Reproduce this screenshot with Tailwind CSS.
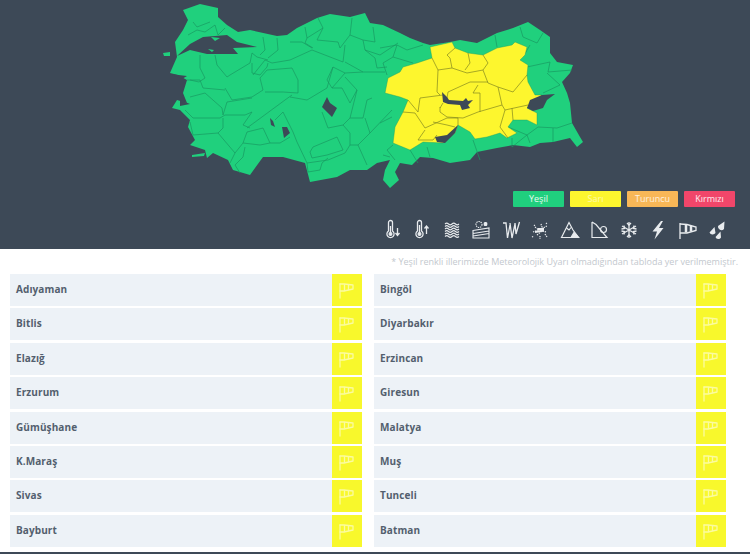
<!DOCTYPE html>
<html lang="tr">
<head>
<meta charset="utf-8">
<title>Meteoroloji Uyarı Haritası</title>
<script src="https://cdn.jsdelivr.net/npm/@tailwindcss/browser@4"></script>
</head>
<body class="bg-white">
<svg width="0" height="0" class="absolute">
  <symbol id="flag" viewBox="0 0 30 32">
    <g fill="none" stroke="#fbfba0" stroke-width="1.3" stroke-linecap="round" stroke-linejoin="round">
      <path d="M8 10V24"/><path d="M8 10H12L21 11V15L12 17H8"/><path d="M12.500 10.500V16.500M16.500 11V15.500"/>
    </g>
  </symbol>
</svg>
<div class="w-[750px] h-[554px] flex flex-col overflow-hidden font-['Open_Sans',sans-serif]">
  <header class="h-[249px] bg-[#3d4957] flex flex-col shrink-0">
    <svg class="block w-[750px] h-[191px] shrink-0 blur-[0.3px]" viewBox="0 0 750 191" stroke-linejoin="round">
      <path fill="#20d07d" d="M183,10 L200,4 L218,8 L218,17 L227,25 L238,32 L250,30 L277,36 L287,35 L297,28 L317,18 L330,14 L350,17 L365,13 L370,23 L383,25 L400,33 L410,38 L423,43 L430,45 L450,42 L460,40 L477,43 L497,33 L513,28 L528,22 L540,30 L550,37 L550,53 L557,62 L573,65 L570,73 L562,82 L567,93 L570,103 L572,123 L580,137 L583,142 L577,147 L570,138 L553,142 L540,143 L530,147 L513,145 L497,148 L477,152 L470,160 L450,163 L433,158 L420,157 L412,165 L400,163 L395,172 L399,180 L390,188 L383,180 L385,170 L390,160 L377,163 L367,170 L350,170 L337,177 L310,182 L305,163 L283,157 L263,157 L250,175 L233,170 L228,160 L213,153 L207,158 L205,150 L190,145 L195,140 L188,127 L190,120 L180,110 L172,108 L177,100 L187,103 L183,93 L187,80 L178,75 L170,73 L177,57 L175,42 L183,30 L188,20 Z"/>
      <path fill="#20d07d" d="M163,53 L170,52 L170,56 L164,56 Z M192,155 L205,153 L204,156 L192,157 Z"/>
      <path fill="#3d4957" d="M177,56 L190,44 L203,37 L227,35 L237,42 L257,47 L233,48 L238,54 L207,54 L190,50 Z M180,100 L190,104 L180,106 Z M170,74 L187,76 L182,79 Z"/>
      <path fill="#20d07d" d="M208,49 L214,50 L212,52 Z M211,37 L220,38 L215,41 Z"/>
      <g fill="none" stroke="#199a62" stroke-width="0.7">
        <path d="M193,22 L197,27 L210,22 M188,35 L197,30 L205,32 L215,25 M215,25 L218,35 L225,28"/>
        <path d="M200,55 L200,68 L205,78 L199,82 L190,80"/>
        <path d="M215,55 L217,65 L227,77 L230,75 L250,63 L252,53 L257,57 L268,60"/>
        <path d="M252,63 L252,73 L260,75 L267,67 L268,63"/>
        <path d="M225,88 L232,100 L252,97 L263,90 L260,78"/>
        <path d="M260,78 L267,70 L292,68 L298,80 L298,93 L283,92 L265,92"/>
        <path d="M187,80 L200,80 L203,88 L225,90"/>
        <path d="M190,97 L205,93 L222,108 L223,115 L227,102 L252,98"/>
        <path d="M185,110 L193,118 L220,118 L225,115 L245,115 L252,112 L243,125 L250,128"/>
        <path d="M190,122 L193,135 L218,133 L223,128 L223,118"/>
        <path d="M218,133 L235,153 L243,143 L247,132 L263,128 L270,143 L280,143 L290,137"/>
        <path d="M235,153 L230,163 M243,143 L260,145 L270,143 M245,147 L243,157 L235,165 L240,173"/>
        <path d="M247,128 L285,100 L292,95 M275,120 L283,112 L293,132 L297,142 L307,163"/>
        <path d="M290,97 L307,100 L327,88 L333,67"/>
        <path d="M253,75 L265,60 L272,63 L290,60 L312,50 L343,62 L345,45"/>
        <path d="M263,37 L265,50 L260,55 M277,38 L278,50 L268,58 M290,42 L302,42 L312,48"/>
        <path d="M305,27 L307,38 L323,28 L318,18 M307,38 L305,43 L313,48"/>
        <path d="M323,28 L317,40 L338,42 L340,48 L350,35 L352,18"/>
        <path d="M350,35 L363,40 L375,42 L373,27 M363,40 L365,50 L380,55 L398,43"/>
        <path d="M365,50 L375,58 L377,68 L387,67 M345,62 L363,72 L385,72 M333,67 L345,73 L363,72"/>
        <path d="M333,67 L327,80 L332,88 L345,73 M342,88 L350,103 L357,90 L345,77 M332,88 L342,88"/>
        <path d="M357,90 L350,118 L363,118 L367,100 L372,98 M350,118 L343,125 L328,128 L325,120 L322,112"/>
        <path d="M343,125 L350,133 L350,145 L358,145 L370,133 L365,118"/>
        <path d="M313,147 L337,137 L343,150 L327,155 L312,158 L310,152 L313,147"/>
        <path d="M350,145 L345,153 L328,160 L307,163 L308,172 L320,170 L322,163 L328,158"/>
        <path d="M358,145 L367,165 M383,155 L390,157 M370,133 L392,110"/>
        <path d="M380,48 L397,45 L407,50 L423,45 M397,45 L393,57 L413,63 M393,57 L383,63 L387,75"/>
        <path d="M495,35 L497,47 M523,37 L520,27 M523,37 L537,43 L543,33 M530,45 L523,57"/>
        <path d="M527,67 L550,62 L548,72 L572,70 M547,73 L560,85 L543,93"/>
        <path d="M538,127 L557,128 L572,123 M553,128 L553,142"/>
        <path d="M508,127 L527,135 L538,127 M527,135 L530,143 M512,138 L512,147 L527,135"/>
        <path d="M473,140 L480,160 M430,157 L427,147 M410,150 L418,163 M393,145 L387,150 L395,160 M380,123 L392,117"/>
      </g>
      <path fill="#fdf62e" stroke="#199a62" stroke-width="0.4" d="M430,47 L452,42 L455,48 L468,53 L483,55 L497,48 L512,45 L515,42 L527,47 L525,55 L520,60 L528,65 L527,75 L528,82 L535,95 L542,95 L527,108 L537,113 L537,125 L527,120 L513,120 L508,127 L517,133 L507,138 L500,133 L487,137 L475,139 L470,132 L458,125 L455,133 L443,143 L423,142 L410,150 L393,143 L395,127 L403,112 L408,100 L400,97 L385,93 L388,78 L400,72 L403,67 L417,63 L432,58 Z"/>
      <g fill="none" stroke="#82871f" stroke-width="0.7">
        <path d="M438,70 L437,92 L440,95 M432,58 L438,70 L452,68 L450,58 L447,55 L455,48"/>
        <path d="M452,68 L467,73 L483,70 L488,63 L483,55 M468,53 L470,63 L465,70"/>
        <path d="M483,70 L488,83 L498,87 L513,92 L527,75"/>
        <path d="M488,82 L470,82 L448,92 L447,98"/>
        <path d="M498,87 L502,105 L478,112 M478,85 L473,93 L480,93 L480,112"/>
        <path d="M502,105 L505,110 L528,105 M505,110 L500,127 L508,138 M512,108 L513,120"/>
        <path d="M408,100 L418,112 L420,98 L443,95"/>
        <path d="M403,112 L415,113 L425,128 L447,118 L458,118 L458,125"/>
        <path d="M440,107 L440,112 L447,117 L463,118 L478,112 M443,103 L440,108"/>
        <path d="M425,130 L418,140 L433,140 L437,135 M433,122 L447,125 L455,127"/>
      </g>
      <path fill="#3d4957" d="M527,108 L530,100 L542,95 L555,94 L547,100 L543,108 L533,111 Z"/>
      <path fill="#3d4957" d="M442,92 L447,97 L449,100 L463,101 L466,98 L468,101 L473,100 L468,105 L470,108 L462,110 L460,105 L448,104 L443,102 Z"/>
      <path fill="#3d4957" d="M435,137 L447,135 L458,125 L455,133 L445,143 L437,142 Z"/>
      <path fill="#3d4957" d="M327,97 L330,103 L337,108 L332,117 L322,107 Z"/>
      <path fill="#3d4957" d="M270,118 L273,121 L275,127 L271,125 Z M282,127 L287,127 L290,133 L284,138 Z"/>
    </svg>
    <div class="flex justify-end gap-[6px] pr-[15px] h-[16px] text-[9px] leading-[16px] text-center text-white/90 shrink-0">
      <div class="w-[51px] rounded-[1px] bg-[#20cf7e]">Yeşil</div>
      <div class="w-[51px] rounded-[1px] bg-[#fdf62e] text-white/60">Sarı</div>
      <div class="w-[51px] rounded-[1px] bg-[#f8b757] text-white/80">Turuncu</div>
      <div class="w-[51px] rounded-[1px] bg-[#f1466a]">Kırmızı</div>
    </div>
    <div class="flex justify-end gap-[7.5px] pr-[22px] mt-[12px] text-[#e8ebee] blur-[0.3px]">
      <svg class="w-[22px] h-[22px]" viewBox="0 0 22 22" fill="none" stroke="currentColor" stroke-width="1.3"><path d="M6.500 3.500a2 2 0 0 1 4 0V12a3.600 3.600 0 1 1-4 0Z"/><circle cx="8.500" cy="15" r="1.400" fill="currentColor"/><path d="M8.500 7V14M15.500 9V16M13.500 14l2 2.500 2-2.500"/></svg>
      <svg class="w-[22px] h-[22px]" viewBox="0 0 22 22" fill="none" stroke="currentColor" stroke-width="1.3"><path d="M6.500 3.500a2 2 0 0 1 4 0V12a3.600 3.600 0 1 1-4 0Z"/><circle cx="8.500" cy="15" r="1.400" fill="currentColor"/><path d="M8.500 6V14M15.500 15V7M13.500 9.500l2-2.500 2 2.500"/></svg>
      <svg class="w-[22px] h-[22px]" viewBox="0 0 22 22" fill="none" stroke="currentColor" stroke-width="1.1"><path d="M4 5q1.750-1.600 3.500 0t3.500 0 3.500 0 3.500 0M4 7.500q1.750-1.600 3.500 0t3.500 0 3.500 0 3.500 0M4 10q1.750-1.600 3.500 0t3.500 0 3.500 0 3.500 0M4 12.500q1.750-1.600 3.500 0t3.500 0 3.500 0 3.500 0M4 15q1.750-1.600 3.500 0t3.500 0 3.500 0 3.500 0M4 17.500q1.750-1.600 3.500 0t3.500 0 3.500 0 3.500 0"/></svg>
      <svg class="w-[22px] h-[22px]" viewBox="0 0 22 22" fill="none" stroke="currentColor" stroke-width="1.1"><circle cx="9" cy="5.500" r="3" stroke-dasharray="1.400 .8"/><path d="M15.500 3v4M13.500 5h4M14 3.500l3 3M17 3.500l-3 3"/><path d="M3 11.500 19 9V19H3ZM3 14.500 19 12M3 17 19 14.500"/></svg>
      <svg class="w-[22px] h-[22px]" viewBox="0 0 22 22" fill="none" stroke="currentColor" stroke-width="1.300"><path d="M3 4H6L7.500 19 10 6M10 4 12 19 15 5M15 4 16 15 19.500 3"/></svg>
      <svg class="w-[22px] h-[22px]" viewBox="0 0 22 22" fill="none" stroke="currentColor" stroke-width="1.200" stroke-dasharray="1.300 1"><path d="M4 13 12 10 18 7M6 8l4 3M12 5l2 6M8 16l5-4 5 1M5 6l1 1M16 15l2 3M11 17v3M3 18l2-1M17 4l1 1"/><path d="M6 13 15 11.500M9 10h6" stroke-dasharray="none" stroke-width="2.200"/></svg>
      <svg class="w-[22px] h-[22px]" viewBox="0 0 22 22" fill="none" stroke="currentColor" stroke-width="1.200"><path d="M2.500 18.500 10 3.500 14 11 17 15 19.500 18.500Z"/><path d="M7.500 9 10 11 12 8.500"/><path d="M15 13.500 19.500 18.500H12Z" fill="currentColor"/></svg>
      <svg class="w-[22px] h-[22px]" viewBox="0 0 22 22" fill="none" stroke="currentColor" stroke-width="1.200"><path d="M4 3V18.500H19L8 5.500 4 3"/><circle cx="15.500" cy="10.500" r="3"/></svg>
      <svg class="w-[22px] h-[22px]" viewBox="0 0 22 22" fill="none" stroke="currentColor" stroke-width="1.300"><path d="M11 3V19M4 7 18 15M18 7 4 15"/><path d="M9 4 11 6 13 4M9 18 11 16 13 18M3.500 10 6.500 9.500 6 6.500M18.500 12 15.500 12.500 16 15.500M18.500 10 15.500 9.500 16 6.500M3.500 12 6.500 12.500 6 15.500"/></svg>
      <svg class="w-[22px] h-[22px]" viewBox="0 0 22 22" fill="currentColor"><path d="M14 2 5.500 12.500H10L7.500 20.500 16.500 9H12L16 2Z"/></svg>
      <svg class="w-[22px] h-[22px]" viewBox="0 0 22 22" fill="none" stroke="currentColor" stroke-width="1.300"><path d="M3 4V20"/><path d="M3 5 10 5.500 19 8V11.500L10 14H3"/><path d="M9 5.500V13.500M14 7V12.500" stroke-width="2.500"/></svg>
      <svg class="w-[22px] h-[22px]" viewBox="0 0 22 22" fill="currentColor"><path d="M18.500 2.500 18 10A3.500 3.500 0 0 1 12 7ZM8.500 8 9.500 14A3.500 3.500 0 0 1 3.500 13.500ZM14.500 12.500 15 18.500A3 3 0 0 1 9.500 18Z"/></svg>
    </div>
  </header>
  <p class="h-[25px] flex items-center justify-end pr-[12px] text-[9px] text-[#c3c8ce] shrink-0">* Yeşil renkli illerimizde Meteorolojik Uyarı olmadığından tabloda yer verilmemiştir.</p>
  <main class="w-[716px] ml-[10px] grid grid-cols-2 gap-x-[12px] gap-y-[2.4px] text-[10px] font-bold tracking-[0.1px] text-[#535f6e]">
    <div class="h-[32px] flex items-center bg-[#edf2f7]"><span class="flex-1 pl-[6px] pb-[1px]">Adıyaman</span><span class="w-[30px] h-full bg-[#f8f82c]"><svg class="w-full h-full"><use href="#flag"/></svg></span></div>
    <div class="h-[32px] flex items-center bg-[#edf2f7]"><span class="flex-1 pl-[6px] pb-[1px]">Bingöl</span><span class="w-[30px] h-full bg-[#f8f82c]"><svg class="w-full h-full"><use href="#flag"/></svg></span></div>
    <div class="h-[32px] flex items-center bg-[#edf2f7]"><span class="flex-1 pl-[6px] pb-[1px]">Bitlis</span><span class="w-[30px] h-full bg-[#f8f82c]"><svg class="w-full h-full"><use href="#flag"/></svg></span></div>
    <div class="h-[32px] flex items-center bg-[#edf2f7]"><span class="flex-1 pl-[6px] pb-[1px]">Diyarbakır</span><span class="w-[30px] h-full bg-[#f8f82c]"><svg class="w-full h-full"><use href="#flag"/></svg></span></div>
    <div class="h-[32px] flex items-center bg-[#edf2f7]"><span class="flex-1 pl-[6px] pb-[1px]">Elazığ</span><span class="w-[30px] h-full bg-[#f8f82c]"><svg class="w-full h-full"><use href="#flag"/></svg></span></div>
    <div class="h-[32px] flex items-center bg-[#edf2f7]"><span class="flex-1 pl-[6px] pb-[1px]">Erzincan</span><span class="w-[30px] h-full bg-[#f8f82c]"><svg class="w-full h-full"><use href="#flag"/></svg></span></div>
    <div class="h-[32px] flex items-center bg-[#edf2f7]"><span class="flex-1 pl-[6px] pb-[1px]">Erzurum</span><span class="w-[30px] h-full bg-[#f8f82c]"><svg class="w-full h-full"><use href="#flag"/></svg></span></div>
    <div class="h-[32px] flex items-center bg-[#edf2f7]"><span class="flex-1 pl-[6px] pb-[1px]">Giresun</span><span class="w-[30px] h-full bg-[#f8f82c]"><svg class="w-full h-full"><use href="#flag"/></svg></span></div>
    <div class="h-[32px] flex items-center bg-[#edf2f7]"><span class="flex-1 pl-[6px] pb-[1px]">Gümüşhane</span><span class="w-[30px] h-full bg-[#f8f82c]"><svg class="w-full h-full"><use href="#flag"/></svg></span></div>
    <div class="h-[32px] flex items-center bg-[#edf2f7]"><span class="flex-1 pl-[6px] pb-[1px]">Malatya</span><span class="w-[30px] h-full bg-[#f8f82c]"><svg class="w-full h-full"><use href="#flag"/></svg></span></div>
    <div class="h-[32px] flex items-center bg-[#edf2f7]"><span class="flex-1 pl-[6px] pb-[1px]">K.Maraş</span><span class="w-[30px] h-full bg-[#f8f82c]"><svg class="w-full h-full"><use href="#flag"/></svg></span></div>
    <div class="h-[32px] flex items-center bg-[#edf2f7]"><span class="flex-1 pl-[6px] pb-[1px]">Muş</span><span class="w-[30px] h-full bg-[#f8f82c]"><svg class="w-full h-full"><use href="#flag"/></svg></span></div>
    <div class="h-[32px] flex items-center bg-[#edf2f7]"><span class="flex-1 pl-[6px] pb-[1px]">Sivas</span><span class="w-[30px] h-full bg-[#f8f82c]"><svg class="w-full h-full"><use href="#flag"/></svg></span></div>
    <div class="h-[32px] flex items-center bg-[#edf2f7]"><span class="flex-1 pl-[6px] pb-[1px]">Tunceli</span><span class="w-[30px] h-full bg-[#f8f82c]"><svg class="w-full h-full"><use href="#flag"/></svg></span></div>
    <div class="h-[32px] flex items-center bg-[#edf2f7]"><span class="flex-1 pl-[6px] pb-[1px]">Bayburt</span><span class="w-[30px] h-full bg-[#f8f82c]"><svg class="w-full h-full"><use href="#flag"/></svg></span></div>
    <div class="h-[32px] flex items-center bg-[#edf2f7]"><span class="flex-1 pl-[6px] pb-[1px]">Batman</span><span class="w-[30px] h-full bg-[#f8f82c]"><svg class="w-full h-full"><use href="#flag"/></svg></span></div>
  </main>
  <footer class="mt-auto h-[2px] bg-[#3d4957] shrink-0"></footer>
</div>
</body>
</html>
